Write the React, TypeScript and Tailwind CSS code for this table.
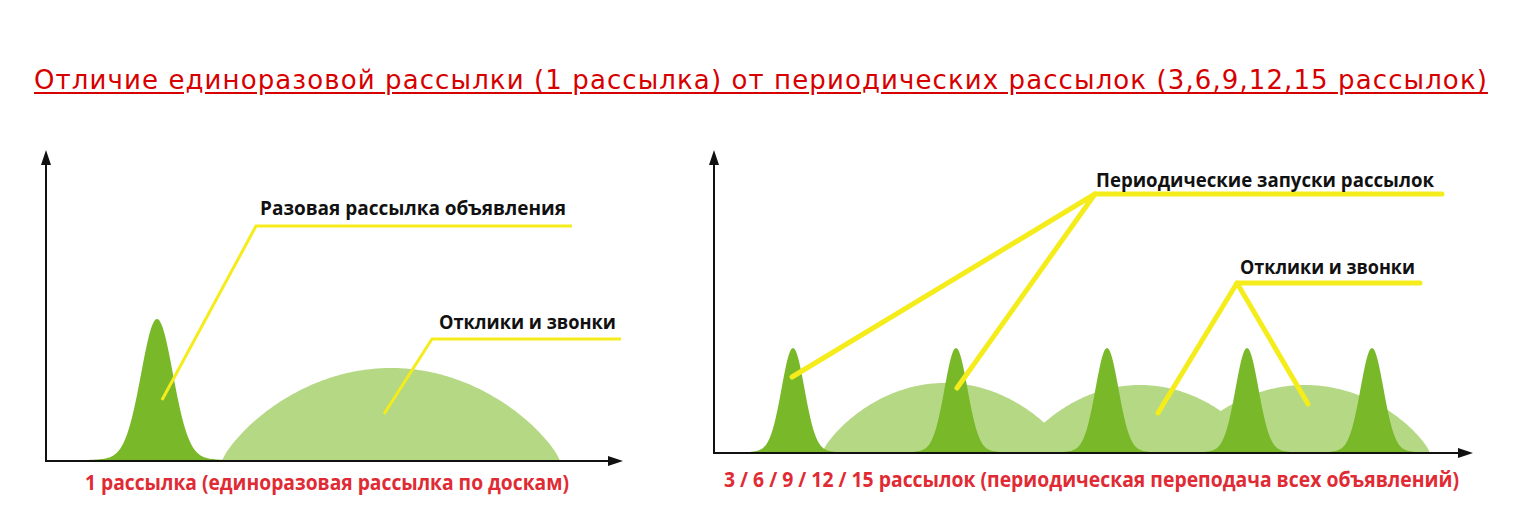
const DARK = "#78b829";
const LIGHT = "#b4d883";
const YELLOW = "#f5ec1c";
const RED = "#e02b35";

// bell with a slight flare at the base
function peakPath(cx: number, base: number, h: number, sigma: number, span: number) {
  const pts: string[] = [];
  for (let x = cx - span; x <= cx + span; x += 1) {
    const dx = x - cx;
    const g = Math.exp(-(dx * dx) / (2 * sigma * sigma));
    const tail = 1 / (1 + Math.pow(dx / (sigma * 1.4), 2));
    const y = base - h * (0.92 * g + 0.08 * tail);
    pts.push(`${x.toFixed(1)},${y.toFixed(1)}`);
  }
  return `M${cx - span},${base} L${pts.join(" L")} L${cx + span},${base} Z`;
}

function domePath(cx: number, w: number, base: number, h: number, k: number) {
  const pts: string[] = [];
  for (let x = cx - w; x <= cx + w; x += 2) {
    const t = 1 - Math.pow((x - cx) / w, 2);
    const y = base - h * Math.pow(Math.max(t, 0), k);
    pts.push(`${x.toFixed(1)},${y.toFixed(1)}`);
  }
  return `M${cx - w},${base} L${pts.join(" L")} L${cx + w},${base} Z`;
}

const labelFont = "'Open Sans', 'Liberation Sans', sans-serif";

function Axes({ x0, y0, top, right }: { x0: number; y0: number; top: number; right: number }) {
  return (
    <g>
      <line x1={x0} y1={y0} x2={x0} y2={top + 12} stroke="#111" strokeWidth={2} />
      <line x1={x0 - 1} y1={y0} x2={right - 12} y2={y0} stroke="#111" strokeWidth={2} />
      <polygon points={`${x0},${top} ${x0 - 5},${top + 15} ${x0 + 5},${top + 15}`} fill="#111" />
      <polygon points={`${right},${y0} ${right - 15},${y0 - 5} ${right - 15},${y0 + 5}`} fill="#111" />
    </g>
  );
}

function SingleChart() {
  return (
    <svg width={680} height={370} viewBox="0 140 680 370" className="block shrink-0">
      <path d={domePath(391, 169, 461, 93, 0.8)} fill={LIGHT} />
      <path d={peakPath(157, 461, 142, 16, 70)} fill={DARK} />
      <Axes x0={46} y0={461} top={150} right={623} />

      <polyline points="162,400 256,226 572,226" fill="none" stroke={YELLOW} strokeWidth={3} />
      <polyline points="384,414 432,339 621,339" fill="none" stroke={YELLOW} strokeWidth={3} />

      <text x={260} y={215} fontFamily={labelFont} fontWeight={700} fontSize={20} fill="#111" textLength={306} lengthAdjust="spacingAndGlyphs">
        Разовая рассылка объявления
      </text>
      <text x={439} y={329} fontFamily={labelFont} fontWeight={700} fontSize={20} fill="#111" textLength={177} lengthAdjust="spacingAndGlyphs">
        Отклики и звонки
      </text>
      <text x={85} y={490} fontFamily={labelFont} fontWeight={700} fontSize={21} fill={RED} textLength={484} lengthAdjust="spacingAndGlyphs">
        1 рассылка (единоразовая рассылка по доскам)
      </text>
    </svg>
  );
}

function PeriodicChart() {
  const peaks = [793, 956, 1107, 1247, 1372];
  return (
    <svg width={848} height={370} viewBox="680 140 848 370" className="block shrink-0">
      <path d={domePath(945, 123, 453, 70, 0.8)} fill={LIGHT} />
      <path d={domePath(1140, 120, 453, 68, 0.8)} fill={LIGHT} />
      <path d={domePath(1305, 125, 453, 68, 0.8)} fill={LIGHT} />
      {peaks.map((cx) => (
        <path key={cx} d={peakPath(cx, 453, 105, 11.5, 45)} fill={DARK} />
      ))}
      <Axes x0={714} y0={453} top={150} right={1473} />

      <polyline points="792,377 1095,194 1442,194" fill="none" stroke={YELLOW} strokeWidth={5} strokeLinecap="round" strokeLinejoin="round" />
      <line x1={957} y1={388} x2={1095} y2={194} stroke={YELLOW} strokeWidth={5} strokeLinecap="round" />
      <polyline points="1158,413 1237,283 1420,283" fill="none" stroke={YELLOW} strokeWidth={5} strokeLinecap="round" strokeLinejoin="round" />
      <line x1={1308} y1={404} x2={1237} y2={283} stroke={YELLOW} strokeWidth={5} strokeLinecap="round" />

      <text x={1096} y={187} fontFamily={labelFont} fontWeight={700} fontSize={20} fill="#111" textLength={338} lengthAdjust="spacingAndGlyphs">
        Периодические запуски рассылок
      </text>
      <text x={1240} y={274} fontFamily={labelFont} fontWeight={700} fontSize={20} fill="#111" textLength={175} lengthAdjust="spacingAndGlyphs">
        Отклики и звонки
      </text>
      <text x={724} y={487} fontFamily={labelFont} fontWeight={700} fontSize={21} fill={RED} textLength={735} lengthAdjust="spacingAndGlyphs">
        3 / 6 / 9 / 12 / 15 рассылок (периодическая переподача всех объявлений)
      </text>
    </svg>
  );
}

export default function App() {
  return (
    <div className="w-[1528px] h-[531px] bg-white overflow-hidden">
      <div className="h-[140px] pt-[67px] pl-[34px]">
        <a
          href="#"
          className="font-['DejaVu_Sans',Verdana,sans-serif] text-[26px] leading-none tracking-[1.1px] text-[#d60000] underline underline-offset-[3px] whitespace-nowrap"
        >
          Отличие единоразовой рассылки (1 рассылка) от периодических рассылок (3,6,9,12,15 рассылок)
        </a>
      </div>
      <div className="flex">
        <SingleChart />
        <PeriodicChart />
      </div>
    </div>
  );
}
